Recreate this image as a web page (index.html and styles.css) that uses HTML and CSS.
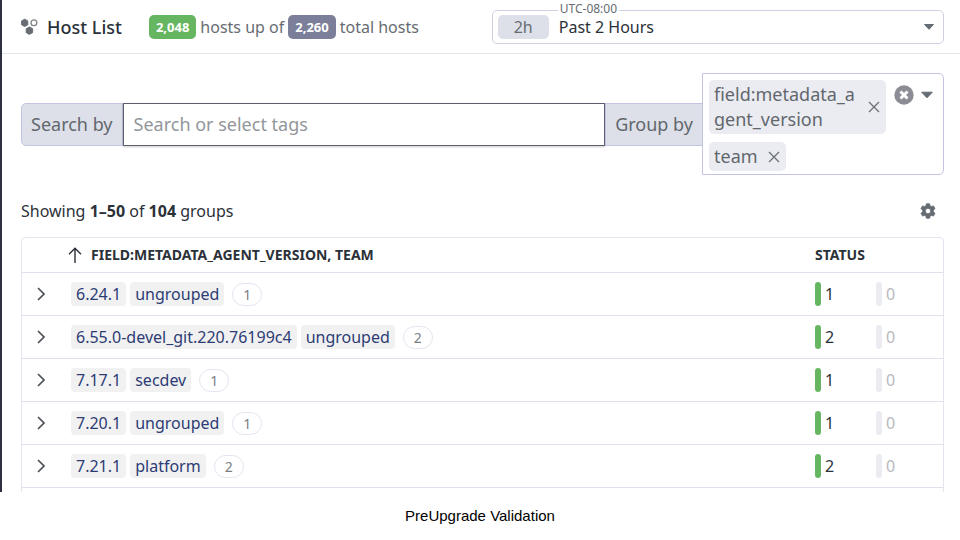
FILE: index.html
```html
<!DOCTYPE html>
<html lang="en">
<head>
<meta charset="utf-8">
<title>Host List</title>
<link rel="stylesheet" href="styles.css">
</head>
<body>
<main class="panel">
  <header class="topbar">
    <svg class="hosts-icon" viewBox="0 0 18 18" width="18" height="18" aria-hidden="true">
      <path d="M3.700 1.200 6.800 2.900v3.900L3.700 8.500.6 6.800V2.900z" fill="#676d73" stroke="#676d73" stroke-linejoin="round"/>
      <circle cx="12.900" cy="4.800" r="2.900" fill="none" stroke="#7d8287" stroke-width="1.300"/>
      <path d="M8.400 9l3.200 1.700v3.900l-3.200 1.800-3.200-1.800v-3.900z" fill="#676d73" stroke="#676d73" stroke-linejoin="round"/>
    </svg>
    <h1 class="title">Host List</h1>
    <p class="counts"><span class="count count-up">2,048</span><span>hosts up of</span><span class="count count-total">2,260</span><span>total hosts</span></p>
    <div class="time">
      <label class="time-zone" for="range">UTC-08:00</label>
      <span class="time-short">2h</span>
      <select class="time-select" id="range"><option>Past 2 Hours</option></select>
      <svg class="time-caret" viewBox="0 0 12 8" width="12" height="8" aria-hidden="true"><path d="M1.5 1.5h9L6 6.3z" fill="#656b73" stroke="#656b73" stroke-linejoin="round"/></svg>
    </div>
  </header>

  <section class="filters">
    <label class="addon addon-first" for="search">Search by</label>
    <input class="search" id="search" type="text" placeholder="Search or select tags">
    <span class="addon addon-group" id="group-label">Group by</span>
    <div class="group-box" role="group" aria-labelledby="group-label">
      <div class="tags">
        <span class="tag"><span class="tag-text">field:metadata_agent_version</span><button class="plain" type="button" aria-label="Remove field"><svg viewBox="0 0 12 12" width="12" height="12"><path d="M1 1l10 10M11 1L1 11" stroke="#6b7078" stroke-width="1.3"/></svg></button></span>
        <span class="tag"><span class="tag-text">team</span><button class="plain" type="button" aria-label="Remove team"><svg viewBox="0 0 12 12" width="12" height="12"><path d="M1 1l10 10M11 1L1 11" stroke="#6b7078" stroke-width="1.3"/></svg></button></span>
      </div>
      <div class="group-actions">
        <button class="plain" type="button" aria-label="Clear all"><svg viewBox="0 0 20 20" width="20" height="20"><circle cx="10" cy="10" r="9.7" fill="#8a8e94"/><path d="M6.5 6.5l7 7M13.5 6.5l-7 7" stroke="#fff" stroke-width="3"/></svg></button>
        <button class="plain" type="button" aria-label="Open"><svg viewBox="0 0 14 8" width="14" height="8"><path d="M1.7 1.2h10.6L7 6.8z" fill="#656b73" stroke="#656b73" stroke-linejoin="round"/></svg></button>
      </div>
    </div>
  </section>

  <div class="summary">
    <p class="showing">Showing <b>1–50</b> of <b>104</b> groups</p>
    <button class="plain" type="button" aria-label="Settings"><svg viewBox="0 0 16 16" width="16" height="16"><path fill="#656b73" stroke="#656b73" stroke-linejoin="round" stroke-width=".8" fill-rule="evenodd" d="M6.400.8h3.200l.5 2.100 1.200.7 2.100-.7L15 5.600 13.400 7.200v1.600L15 10.400l-1.600 2.700-2.100-.7-1.200.7-.5 2.100H6.400l-.5-2.100-1.200-.7-2.100.7L1 10.400l1.600-1.600V7.200L1 5.600l1.600-2.700 2.100.7 1.200-.7zM8 5.300a2.700 2.700 0 1 0 0 5.400 2.700 2.700 0 0 0 0-5.400z"/></svg></button>
  </div>

  <div class="table-frame">
    <table class="groups">
      <thead>
        <tr>
          <th class="col-toggle"></th>
          <th><span class="sort"><svg viewBox="0 0 14 16" width="14" height="16" aria-hidden="true"><path d="M7 16V1.200M1 7.200l6-6 6 6" fill="none" stroke="#2b3138" stroke-width="1.400"/></svg>FIELD:METADATA_AGENT_VERSION, TEAM</span></th>
          <th class="col-status">STATUS</th>
          <th class="col-down"></th>
        </tr>
      </thead>
      <tbody>
        <tr>
          <td class="col-toggle"><button class="plain" type="button" aria-label="Expand"><svg viewBox="0 0 8 14" width="8" height="14"><path d="M1 1l6 6-6 6" fill="none" stroke="#4c5157" stroke-width="1.700"/></svg></button></td>
          <td><div class="cell"><a class="chip" href="#">6.24.1</a><a class="chip" href="#">ungrouped</a><span class="pill">1</span></div></td>
          <td><span class="stat stat-up">1</span></td><td><span class="stat stat-down">0</span></td>
        </tr>
        <tr>
          <td class="col-toggle"><button class="plain" type="button" aria-label="Expand"><svg viewBox="0 0 8 14" width="8" height="14"><path d="M1 1l6 6-6 6" fill="none" stroke="#4c5157" stroke-width="1.700"/></svg></button></td>
          <td><div class="cell"><a class="chip" href="#">6.55.0-devel_git.220.76199c4</a><a class="chip" href="#">ungrouped</a><span class="pill">2</span></div></td>
          <td><span class="stat stat-up">2</span></td><td><span class="stat stat-down">0</span></td>
        </tr>
        <tr>
          <td class="col-toggle"><button class="plain" type="button" aria-label="Expand"><svg viewBox="0 0 8 14" width="8" height="14"><path d="M1 1l6 6-6 6" fill="none" stroke="#4c5157" stroke-width="1.700"/></svg></button></td>
          <td><div class="cell"><a class="chip" href="#">7.17.1</a><a class="chip" href="#">secdev</a><span class="pill">1</span></div></td>
          <td><span class="stat stat-up">1</span></td><td><span class="stat stat-down">0</span></td>
        </tr>
        <tr>
          <td class="col-toggle"><button class="plain" type="button" aria-label="Expand"><svg viewBox="0 0 8 14" width="8" height="14"><path d="M1 1l6 6-6 6" fill="none" stroke="#4c5157" stroke-width="1.700"/></svg></button></td>
          <td><div class="cell"><a class="chip" href="#">7.20.1</a><a class="chip" href="#">ungrouped</a><span class="pill">1</span></div></td>
          <td><span class="stat stat-up">1</span></td><td><span class="stat stat-down">0</span></td>
        </tr>
        <tr>
          <td class="col-toggle"><button class="plain" type="button" aria-label="Expand"><svg viewBox="0 0 8 14" width="8" height="14"><path d="M1 1l6 6-6 6" fill="none" stroke="#4c5157" stroke-width="1.700"/></svg></button></td>
          <td><div class="cell"><a class="chip" href="#">7.21.1</a><a class="chip" href="#">platform</a><span class="pill">2</span></div></td>
          <td><span class="stat stat-up">2</span></td><td><span class="stat stat-down">0</span></td>
        </tr>
      </tbody>
    </table>
  </div>
</main>
<p class="caption">PreUpgrade Validation</p>
</body>
</html>
```
FILE: styles.css
```css
* {
  box-sizing: border-box;
}

body {
  margin: 0;
  background: #fff;
  color: #2b3138;
  font: 16px/24px "Noto Sans", sans-serif;
}

h1,
p {
  margin: 0;
}

.panel {
  border-left: 2px solid #2e3042;
}

.plain {
  display: flex;
  flex: none;
  padding: 0;
  border: 0;
  background: none;
}

.plain svg {
  display: block;
}

/* Top bar */
.topbar {
  display: flex;
  align-items: center;
  height: 54px;
  padding: 0 16px 0 19px;
  border-bottom: 1px solid #e3e4e9;
}

.hosts-icon {
  flex: none;
  margin-right: 8px;
}

.title {
  font-size: 18px;
  font-weight: 500;
}

.counts {
  display: flex;
  flex: 1;
  align-items: center;
  gap: 4px;
  margin-left: 27px;
  color: #676c72;
  white-space: nowrap;
}

.count {
  padding: 0 7px;
  border-radius: 5px;
  color: #fff;
  font-size: 13px;
  font-weight: 700;
}

.count-up {
  background: #66b661;
}

.count-total {
  background: #7b7f9a;
}

.time {
  position: relative;
  display: flex;
  flex: none;
  align-items: center;
  width: 49%;
  height: 34px;
  padding: 0 5px;
  border: 1px solid #cfd0e4;
  border-radius: 5px;
}

.time-zone {
  position: absolute;
  top: -12px;
  left: 65px;
  padding: 0 2px;
  background: #fff;
  color: #676c72;
  font-size: 12px;
  line-height: 20px;
}

.time-short {
  width: 51px;
  border-radius: 5px;
  background: #dde0e9;
  color: #676c72;
  text-align: center;
}

.time-select {
  flex: 1;
  margin: 0;
  padding: 0 0 0 10px;
  border: 0;
  background: none;
  color: inherit;
  font: inherit;
  appearance: none;
}

.time-caret {
  position: absolute;
  right: 8px;
  pointer-events: none;
}

/* Filters */
.filters {
  display: flex;
  align-items: center;
  padding: 19px 16px 0 19px;
  font-size: 18px;
  line-height: 25px;
}

.addon {
  flex: none;
  padding: 8px 9px;
  border: 1px solid #c3c5e0;
  background: #dde0e9;
  color: #62676d;
}

.addon-first {
  border-radius: 5px 0 0 5px;
}

.addon-group {
  border-right: 0;
}

.search {
  flex: 1;
  min-width: 0;
  height: 43px;
  padding: 0 10px;
  border: 1px solid #5b5e6c;
  border-radius: 0;
  background: #fff;
  box-shadow: 0 1px 2px #0003;
  color: inherit;
  font: inherit;
}

.search::placeholder {
  color: #92969a;
}

.group-box {
  display: flex;
  flex: none;
  gap: 8px;
  width: 242px;
  padding: 6px 6px 3px;
  border: 1px solid #c3c5e0;
  border-radius: 0 5px 5px 0;
}

.tags {
  display: flex;
  flex-direction: column;
  flex: none;
  align-items: flex-start;
  gap: 8px;
  width: 177px;
}

.tag {
  display: flex;
  align-items: center;
  gap: 10px;
  padding: 2px 6px 2px 5px;
  border-radius: 5px;
  background: #ebecf2;
  color: #62676d;
}

.tag-text {
  word-break: break-all;
}

.group-actions {
  display: flex;
  align-items: center;
  gap: 6px;
  height: 29px;
}

/* Summary */
.summary {
  display: flex;
  align-items: center;
  justify-content: space-between;
  padding: 24px 24px 0 19px;
}

/* Groups table */
.table-frame {
  margin: 14px 16px 0 19px;
  padding-bottom: 4px;
  border: 1px solid #e4e4ef;
  border-bottom: 0;
  border-radius: 5px 5px 0 0;
}

.groups {
  width: 100%;
  border-spacing: 0;
  table-layout: fixed;
}

.groups th {
  height: 35px;
  padding: 0;
  border-bottom: 1px solid #e1e1ec;
  font-size: 14px;
  font-weight: 700;
  line-height: 20px;
  text-align: left;
}

.groups td {
  height: 43px;
  padding: 0;
  border-bottom: 1px solid #e1e1ec;
}

.groups .col-toggle {
  width: 49px;
  padding-left: 15px;
}

.col-status {
  width: 61px;
}

.col-down {
  width: 67px;
}

.sort {
  display: flex;
  align-items: center;
  gap: 9px;
  margin-left: -3px;
}

.cell {
  display: flex;
  align-items: center;
  gap: 4px;
}

.chip {
  padding: 0 5px;
  border-radius: 4px;
  background: #f1f1f2;
  color: #2d3c74;
  text-decoration: none;
}

.pill {
  width: 30px;
  margin-left: 4px;
  border: 1px solid #e4e4ef;
  border-radius: 12px;
  color: #7b7f84;
  font-size: 14px;
  line-height: 21px;
  text-align: center;
}

.stat {
  display: flex;
  align-items: center;
  gap: 4px;
}

.stat::before {
  width: 6px;
  height: 24px;
  border-radius: 3px;
  background: #66b661;
  content: "";
}

.stat-down {
  color: #b7b9bc;
}

.stat-down::before {
  background: #ebecf2;
}

.caption {
  padding: 14px 0;
  color: #000;
  font: 15px/20px "Liberation Sans", sans-serif;
  text-align: center;
}
```
